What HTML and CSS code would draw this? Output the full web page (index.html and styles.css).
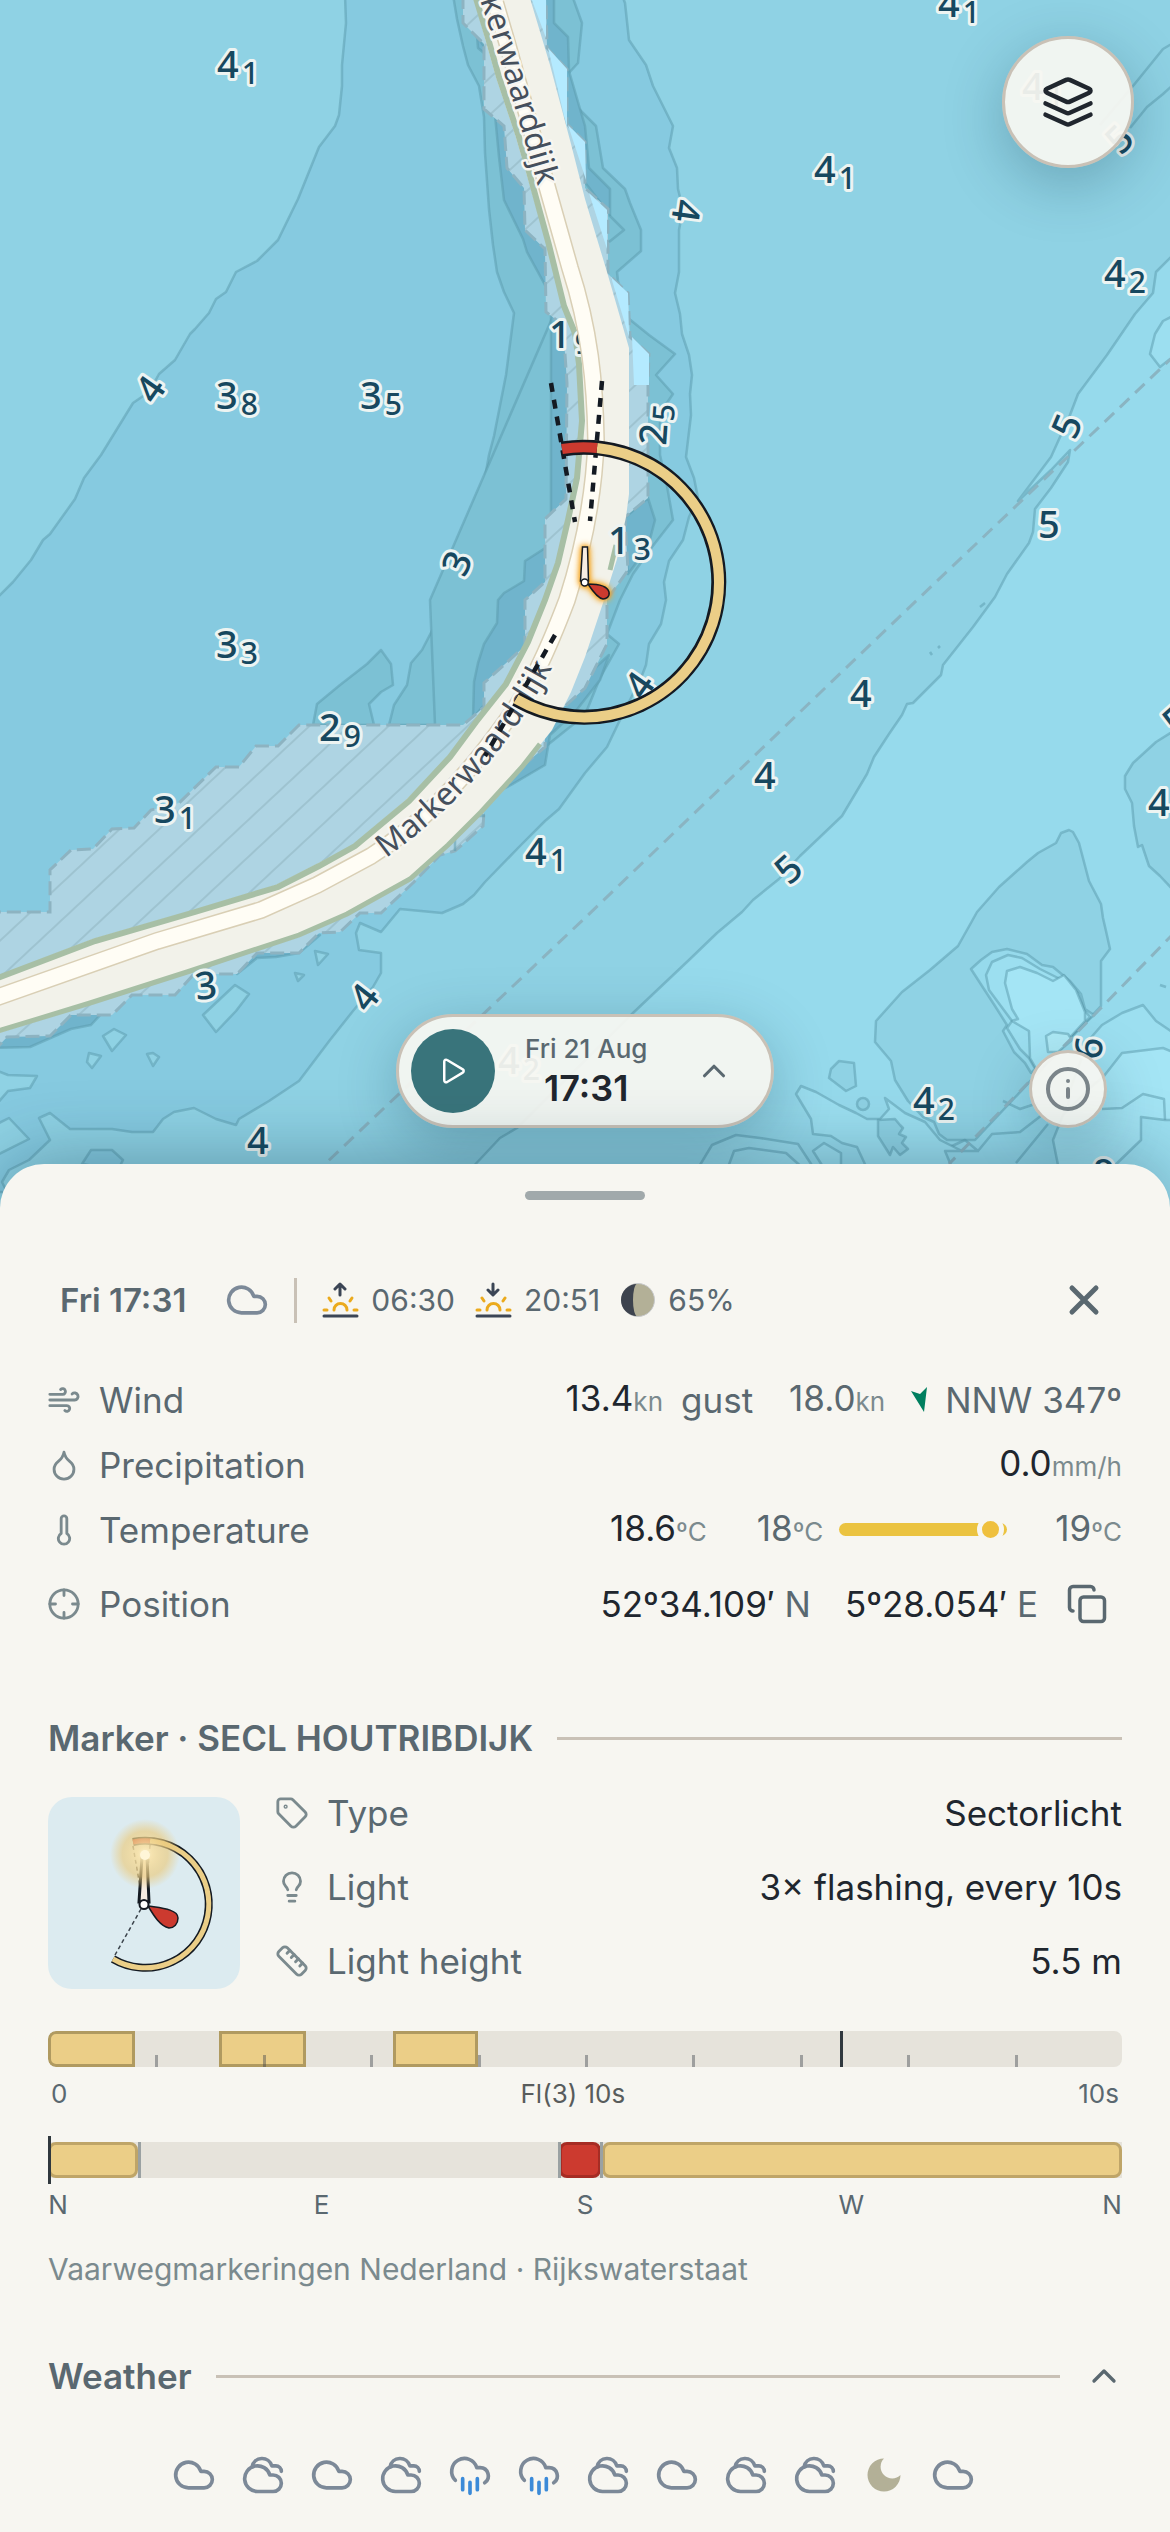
FILE: index.html
```
<!DOCTYPE html>
<html lang="en">
<head>
    <meta charset="utf-8">
    <meta name="viewport" content="width=device-width, initial-scale=1">
    <title>Marker - SECL HOUTRIBDIJK</title>
    <link rel="stylesheet" href="styles.css">
</head>
<body>

<!-- icons used more than once -->
<svg class="sprite" width="0" height="0" aria-hidden="true">
    <symbol id="cloud" viewBox="0 0 24 24"><path d="M17.5 19H9a7 7 0 1 1 6.71-9h1.79a4.5 4.5 0 1 1 0 9Z"/></symbol>
    <symbol id="cloudy" viewBox="0 0 24 24"><path d="M17.5 21H9a7 7 0 1 1 6.71-9h1.79a4.5 4.5 0 1 1 0 9Z"/><path d="M22 10a3 3 0 0 0-3-3h-2.207a5.502 5.502 0 0 0-10.702.5"/></symbol>
    <symbol id="rain" viewBox="0 0 24 24"><path d="M4 14.899A7 7 0 1 1 15.71 8h1.79a4.5 4.5 0 0 1 2.5 8.242"/><path class="drops" d="M16 14v6M8 14v6M12 16v6"/></symbol>
    <symbol id="chevron-up" viewBox="0 0 24 24"><path d="m18 15-6-6-6 6"/></symbol>
</svg>

<main class="map">
    <svg class="chart" viewBox="0 0 1170 1210" preserveAspectRatio="xMidYMin slice" role="img" aria-label="Nautical chart of the Markerwaarddijk">
        <defs>
            <pattern id="hatch" width="27" height="27" patternUnits="userSpaceOnUse" patternTransform="rotate(47)">
                <rect class="tidal" width="27" height="27"/>
                <path class="hatch-line" d="M13 0V27"/>
            </pattern>
            <path id="roadNorth" d="M480 0 Q510 88 535 176 L548 222"/>
            <path id="roadSouth" d="M386 858 C450 812 505 755 552 668 L562 644"/>
        </defs>

        <rect class="d4" width="1170" height="1210"/>

        <!-- depth 3 - 4 m -->
        <path class="d3 contour" d="M345 -5L346 23L342 65L342 86L339 115L335 126L319 147L298 199L278 240L257 261L236 272L226 292L216 299L209 313L195 329L190 334L175 360L159 374L149 392L133 403L101 455L84 478L75 499L50 534L43 540L31 560L13 582L-5 600V1192H7L2 1182L9 1170L29 1160L50 1140L39 1118L50 1113L70 1129L112 1129L132 1132L153 1132L163 1119L174 1112L194 1108L216 1119L236 1125L239 1119L269 1101L299 1081L330 1040L353 1011L373 987L381 973V953L359 950L356 933L360 923L381 932L400 909L442 913L463 904L474 895L485 882L521 845L545 821L559 809L585 773L607 747L619 722L641 678L646 665L649 644L661 624L666 600L664 582L669 561L683 540L689 517L698 498L694 478L686 457L691 415L690 394L692 375L689 355L682 334L680 314L675 293L679 272V230L683 209L678 189L677 168L669 148L673 126L653 86L646 65L629 40L625 3L622 -5Z"/>
        <path class="d4 contour" d="M235 985L249 994L236 1011L216 1032L203 1015ZM114 1029L126 1035L112 1051L103 1036ZM89 1053L101 1056L92 1068L87 1062ZM147 1054L153 1053L159 1057L153 1066ZM315 951L328 954L318 965ZM295 973L304 975L298 981ZM-5 1070L8 1075L37 1076L30 1088L8 1091L-5 1106ZM-5 1125L9 1118L29 1139L-5 1156Z"/>
        <path class="d3 contour" d="M82 1164L91 1150H112L123 1160L118 1170Z"/>

        <!-- depth 2 - 3 m -->
        <path class="d2 contour" d="M453 -5L457 19L463 46L468 65L479 86L484 117L485 153L489 209L493 245L497 272L504 292L514 313L506 375L494 436L489 455L484 483L479 498L475 520L468 540L463 547L456 564L440 600L436 623L422 650L411 663L407 685L394 705L389 725L480 725L560 600L600 400L560 200L500 -5Z"/>
        <path class="d2 contour" d="M313 725L317 704L340 685L367 664L381 650L391 664L393 685L381 692L369 704L374 725Z"/>
        <path class="d2 contour" d="M500 -5L573 -2L582 23L578 63L567 75V97L585 115L596 126L603 168L625 189L630 203L641 230V251L617 272L618 281L628 318L649 335L675 354L656 375L673 394L660 413V455L667 486L673 520L652 547L633 574L620 600L607 634L619 644L600 678L585 715L545 747L515 768L489 800L440 850L430 600L560 300Z"/>

        <!-- depth 1 - 2 m -->
        <path class="d1 contour" d="M477 36L478 48L495 62L495 115L499 157L504 200L523 239L527 252L545 285L565 300L520 100Z"/>
        <path class="d1 contour" d="M551 316V513L570 505V316Z"/>
        <path class="d1 contour" d="M550 545L525 561L524 581L504 593L498 600L497 623L484 644L478 663L474 682L473 718L540 640Z"/>
        <path class="d1 contour" d="M554 -5V23L568 37L569 71L585 126L589 168L610 189V215L560 150L530 -5Z"/>
        <path class="d1 contour" d="M622 520L648 498L655 520L648 547L628 574ZM609 655L600 680L575 712L550 735L545 765L511 785L489 796L500 770L560 700Z"/>
        <path class="d1 contour" d="M-5 1048L30 1047L71 1029L91 1025L103 1012L80 1000L-5 1035ZM237 974L257 958L276 957L299 953L320 935L240 950Z"/>

        <!-- drying banks -->
        <path class="bank edge" d="M463 -5V23L484 44V109L504 126L507 168L524 188L525 230L545 249L546 312L563 325L567 383L566 499L545 519V582L525 600V646L484 683V707L463 725H299L278 746H256L239 767H216L179 803L151 810L134 828L112 829L93 849L71 850L50 870V912H-5V1050L7 1037L50 1036L71 1015H112L132 995H175L194 974H237L257 953H299L319 933L340 932L360 913H381L414 882L440 855L455 851L483 826L485 799L511 776L545 747V724L585 688L607 644L607 600L628 570L625 517L648 498V385L649 354L630 337L628 293L608 274V209L585 188V142L567 124V69L547 48L546 -5Z"/>
        <path class="dry" d="M530 -5H546V38ZM548 48L567 69V128ZM568 125L585 142L586 180ZM589 193L607 210V249ZM611 277L628 293L629 337ZM632 337L649 354V385H634Z"/>
        <path class="thin" d="M609 215L624 230L609 242M485 816H470M455 851V830M470 815H485"/>

        <!-- deeper water in the east -->
        <path class="d5 contour" d="M1175 253L1156 272L1153 293L1135 314L1107 355L1078 394L1070 415L1051 457L1018 501L1051 470L1070 450L1068 462L1051 488L1035 509L1033 532L1029 543L1007 574L995 597L973 627L943 665L941 675L913 703L907 704L902 715L889 734L874 757L867 774L842 816L820 837L800 856L779 879L753 900L742 912L717 933L689 960L633 1013L517 1128L500 1138L470 1170V1215H1175Z"/>
        <path class="line" d="M1175 42L1163 49L1133 86L1100 125M1175 83L1163 94L1147 107L1130 128"/>
        <path class="d6 contour" d="M1175 315L1163 321L1155 334L1150 354L1160 367L1175 355Z"/>
        <path class="d4 contour" d="M1175 730L1156 742L1133 763L1125 776V789L1132 803L1134 826L1138 847L1142 845L1149 866L1160 876L1175 892Z"/>
        <path class="d4 contour" d="M1069 830L1061 833L1056 843L1038 853L1027 862L999 887L977 912L972 921L958 946L930 970L902 992L876 1021L875 1042L891 1061L895 1080L908 1101L923 1117L934 1122L939 1134L947 1140H975L1101 1006V961L1110 949L1106 931L1103 918L1101 904L1089 881L1079 843L1073 832Z"/>
        <path class="d5 contour" d="M971 969L981 960L992 952L1007 949L1027 954L1042 965L1053 967L1070 981L1081 994L1085 1009L1094 1015L1031 1073L1025 1063L1014 1052L1003 1031L1007 1025L995 1006Z"/>
        <path class="d6 contour" d="M986 975L992 962L1008 955L1022 958L1040 969L1062 980L1078 993L1084 1010L1090 1017L1036 1070L1029 1058L1020 1049L1007 1028L1012 1021L989 990Z"/>
        <path class="d7 contour" d="M1005 983L1007 971L1020 967L1037 973L1053 981L1064 975L1076 990L1085 1012V1021L1038 1072L1030 1058L1029 1031L1012 1021L1018 1019L1012 1009Z"/>
        <path class="d8 contour" d="M1046 1036L1053 1032L1068 1034L1072 1040L1058 1052H1048Z"/>
        <path class="d6 contour" d="M1088 1041L1102 1025L1122 1013L1143 1005L1156 1021L1175 1034V1215H1080L1060 1170L1070 1090Z"/>
        <path class="d7 contour" d="M1090 1088L1104 1076L1122 1053L1163 1048L1175 1053V1120L1165 1120L1141 1117V1140L1110 1170H1059L1053 1140L1063 1115Z"/>
        <path class="line" d="M1102 1109L1122 1108L1143 1094L1164 1099L1165 1120M1003 1101L1020 1109L1038 1103M962 1151L979 1151M950 1147L965 1140L978 1151L992 1134L1020 1132L1042 1115M1016 1163L1048 1124"/>
        <path class="d6 contour" d="M796 1094L801 1086L816 1092L839 1105L856 1113L867 1119H880L889 1109L885 1098L905 1113L925 1122L940 1140L962 1151L945 1151L955 1175H870L857 1147L842 1143L831 1136L813 1134L811 1119Z"/>
        <path class="d4 contour" d="M831 1069L839 1061L854 1063L856 1086L846 1091L829 1078ZM857 1104a6 6 0 1 0 12 0a6 6 0 1 0-12 0M878 1120L895 1119L900 1125L903 1128L899 1134L906 1137L902 1143L908 1149L900 1155L893 1147L890 1155L878 1136Z"/>
        <path class="d6 contour" d="M697 1170L712 1145L736 1135L760 1138L798 1144L815 1170ZM727 1170L734 1151L749 1148L786 1153L805 1170ZM813 1151L824 1143L841 1153V1170H825Z"/>
        <path class="line" d="M980 607l5-4M930 652l2 3M938 648l2-2M1160 985l6 2"/>
        <path class="route" d="M1175 355L917 600L587 916L326 1163M1175 932L949 1164"/>

        <!-- dike -->
        <path class="land" d="M473 -5L485 38L496 77L515 134L526 172L547 245L563 306L573 333L578 364L581 421L576 478L567 520L556 563L543 600L526 642L504 684L474 722L448 757L407 799L353 845L317 864L276 885L194 910L93 939L-5 977V1034L90 1005L187 973L299 937L347 916L410 881L448 847L481 814L522 768L552 730L571 692L585 657L604 600L617 559L626 517L629 494V348L607 272L585 199L571 144L550 65L529 -5Z"/>
        <path class="grass" d="M475 -5L488 38L499 77L518 134L529 172L549 245L564 306L575 333L579 364L582 421L577 478L568 520L558 563L545 600L528 642L506 684L476 722L450 757L409 801L355 846L319 866L278 887L195 912L95 941L-5 979"/>
        <path class="grass thin-grass" d="M-5 1032L90 1003L187 972L299 935L347 914L410 879L448 845L481 812L522 767L540 744M610 570L616 545"/>
        <g class="depth"><text x="549" y="348">1<tspan dx="4" dy="6">9</tspan></text></g>
        <path class="casing" d="M493 -5L508 46L548 190L570 268C590 330 595 383 596 440C594 500 583 550 567 600C548 650 530 690 504 724C460 785 420 825 371 856L317 885L261 910L157 941L-5 998"/>
        <path class="road" d="M493 -5L508 46L548 190L570 268C590 330 595 383 596 440C594 500 583 550 567 600C548 650 530 690 504 724C460 785 420 825 371 856L317 885L261 910L157 941L-5 998"/>

        <g class="road-name">
            <text><textPath href="#roadNorth">kerwaarddijk</textPath></text>
            <text><textPath href="#roadSouth">Markerwaarddijk</textPath></text>
        </g>

        <!-- soundings, decimals set lower and smaller -->
        <g class="depth">
            <text x="217" y="78">4<tspan dx="3" dy="6">1</tspan></text>
            <text x="216" y="409">3<tspan dx="3" dy="6">8</tspan></text>
            <text x="360" y="409">3<tspan dx="3" dy="6">5</tspan></text>
            <text x="938" y="17">4<tspan dx="3" dy="6">1</tspan></text>
            <text x="814" y="183">4<tspan dx="3" dy="6">1</tspan></text>
            <text x="1104" y="287">4<tspan dx="3" dy="6">2</tspan></text>
            <text x="1022" y="100">4<tspan dx="3" dy="6">1</tspan></text>
            <text x="608" y="554">1<tspan dx="4" dy="6">3</tspan></text>
            <text x="216" y="658">3<tspan dx="3" dy="6">3</tspan></text>
            <text x="319" y="741">2<tspan dx="3" dy="6">9</tspan></text>
            <text x="154" y="823">3<tspan dx="3" dy="6">1</tspan></text>
            <text x="525" y="865">4<tspan dx="3" dy="6">1</tspan></text>
            <text x="498" y="1074">4<tspan dx="3" dy="6">2</tspan></text>
            <text x="913" y="1114">4<tspan dx="3" dy="6">2</tspan></text>
            <text x="1038" y="538">5</text>
            <text x="247" y="1154">4</text>
            <text x="850" y="707">4</text>
            <text x="754" y="789">4</text>
            <text x="1148" y="816">4</text>
            <text x="1093" y="1186">9</text>
            <text transform="translate(666 446) rotate(-86)">2<tspan dx="3" dy="6">5</tspan></text>
            <text transform="translate(150 390) rotate(-55)" x="-10" y="13">4</text>
            <text transform="translate(457 564) rotate(-66)" x="-10" y="13">3</text>
            <text transform="translate(686 210) rotate(98)" x="-10" y="13">4</text>
            <text transform="translate(1067 427) rotate(-67)" x="-10" y="13">5</text>
            <text transform="translate(1119 140) rotate(-45)" x="-10" y="13">5</text>
            <text transform="translate(205 986) rotate(-6)" x="-10" y="13">3</text>
            <text transform="translate(364 998) rotate(-52)" x="-10" y="13">4</text>
            <text transform="translate(788 870) rotate(-42)" x="-10" y="13">5</text>
            <text transform="translate(639 686) rotate(-55)" x="-10" y="13">4</text>
            <text transform="translate(1176 721) rotate(-42)" x="-10" y="13">5</text>
            <text transform="translate(1089 1049) rotate(-80)" x="-10" y="13">6</text>
        </g>

        <!-- sector light -->
        <path class="bearing" d="M551 383L575 522M602 381L590 521M555 635L485 756"/>
        <path class="ring-border" d="M516 699A135 135 0 1 0 562 449"/>
        <path class="ring-white" d="M516 699A135 135 0 1 0 597 448"/>
        <path class="ring-red" d="M597 448A135 135 0 0 0 562 449"/>
        <g class="beacon">
            <path d="M582.500 547H587.500L588.500 581H580.500Z" fill="#f6ece2"/>
            <path d="M588 584C594 584 607 585 609 592C610 597 606 599 603 599C597 598 592 590 588 584Z" fill="#cc3a2f"/>
            <circle cx="584.700" cy="582.500" r="3.500" fill="#fff"/>
        </g>
    </svg>

    <button class="round-button layers" type="button" aria-label="Map layers">
        <svg class="icon" width="54" height="54" viewBox="0 0 24 24"><path d="m12.830 2.180a2 2 0 0 0-1.660 0L2.600 6.080a1 1 0 0 0 0 1.830l8.580 3.910a2 2 0 0 0 1.660 0l8.580-3.900a1 1 0 0 0 0-1.830Z"/><path d="m22 17.650-9.170 4.160a2 2 0 0 1-1.660 0L2 17.650"/><path d="m22 12.650-9.170 4.160a2 2 0 0 1-1.660 0L2 12.650"/></svg>
    </button>

    <div class="time-pill">
        <button class="play" type="button" aria-label="Play forecast">
            <svg class="icon" width="30" height="30" viewBox="0 0 24 24"><path d="M5 4.500a1.500 1.500 0 0 1 2.300-1.300l12.500 7.500a1.500 1.500 0 0 1 0 2.600L7.300 20.800A1.500 1.500 0 0 1 5 19.500Z"/></svg>
        </button>
        <div class="pill-text">
            <span class="pill-date">Fri 21 Aug</span>
            <span class="pill-time">17:31</span>
        </div>
        <button class="plain-button expand" type="button" aria-label="Expand timeline">
            <svg class="icon" width="38" height="38"><use href="#chevron-up"/></svg>
        </button>
    </div>

    <button class="round-button info" type="button" aria-label="Map information">
        <svg class="icon" width="48" height="48" viewBox="0 0 24 24"><circle cx="12" cy="12" r="10"/><path d="M12 16v-4M12 8h.01"/></svg>
    </button>
</main>

<section class="sheet">
    <div class="handle"></div>

    <header class="sheet-header">
        <h1>Fri 17:31</h1>
        <svg class="icon weather-icon" width="44" height="44"><use href="#cloud"/></svg>
        <span class="divider"></span>
        <span class="sun">
            <svg class="sun-icon" width="37" height="37" viewBox="0 0 37 37"><path class="sun-dark" d="M18 13V3M13 7L18 2L23 7M2 34H35"/><path class="sun-rays" d="M12 28a6.500 6.500 0 0 1 13 0M2 28H5M32 28H35M7 16L9 19M30 16L28 19"/></svg>
            06:30
        </span>
        <span class="sun">
            <svg class="sun-icon" width="37" height="37" viewBox="0 0 37 37"><path class="sun-dark" d="M18 2V12M13 8L18 13L23 8M2 34H35"/><path class="sun-rays" d="M12 28a6.500 6.500 0 0 1 13 0M2 28H5M32 28H35M7 16L9 19M30 16L28 19"/></svg>
            20:51
        </span>
        <span class="sun">
            <svg width="36" height="36" viewBox="0 0 36 36"><circle cx="18" cy="18" r="16.500" fill="#b3b097" stroke="#c8cacc"/><path d="M17 2A16 16 0 0 0 17 34A4 16 0 0 1 17 2Z" fill="#3d434e"/></svg>
            65%
        </span>
        <button class="plain-button close" type="button" aria-label="Close">
            <svg class="icon" width="48" height="48" viewBox="0 0 24 24"><path d="M18 6 6 18M6 6l12 12"/></svg>
        </button>
    </header>

    <dl class="facts">
        <div class="fact">
            <dt><svg class="icon" width="34" height="34" viewBox="0 0 24 24"><path d="M17.700 7.700a2.500 2.500 0 1 1 1.800 4.300H2"/><path d="M9.600 4.600A2 2 0 1 1 11 8H2"/><path d="M12.600 19.400A2 2 0 1 0 14 16H2"/></svg>Wind</dt>
            <dd class="wind">
                <span><b>13.4</b><small>kn</small></span>
                <span>gust</span>
                <span class="gust">18.0<small>kn</small></span>
                <svg width="16" height="26" viewBox="0 0 16 26"><path d="M0 4L9 7L16 0L13 25Z" fill="#007f5f"/></svg>
                <span>NNW 347º</span>
            </dd>
        </div>
        <div class="fact">
            <dt><svg class="icon" width="34" height="34" viewBox="0 0 24 24"><path d="M12 22a7 7 0 0 0 7-7c0-2-1-3.900-3-5.500s-3.500-4-4-6.500c-.5 2.500-2 4.900-4 6.500C6 11.100 5 13 5 15a7 7 0 0 0 7 7z"/></svg>Precipitation</dt>
            <dd><span><b>0.0</b><small>mm/h</small></span></dd>
        </div>
        <div class="fact">
            <dt><svg class="icon" width="34" height="34" viewBox="0 0 24 24"><path d="M14 4v10.540a4 4 0 1 1-4 0V4a2 2 0 0 1 4 0Z"/></svg>Temperature</dt>
            <dd class="temp">
                <span><b>18.6</b><small>ºC</small></span>
                <span class="low">18<small>ºC</small></span>
                <span class="range"><span class="range-dot" style="left: 90%"></span></span>
                <span class="high">19<small>ºC</small></span>
            </dd>
        </div>
        <div class="fact position">
            <dt><svg class="icon" width="34" height="34" viewBox="0 0 24 24"><circle cx="12" cy="12" r="10"/><path d="M22 12h-4M6 12H2M12 6V2M12 22v-4"/></svg>Position</dt>
            <dd>
                <span><b>52º34.109′</b> N</span>
                <span><b>5º28.054′</b> E</span>
                <button class="plain-button copy" type="button" aria-label="Copy position">
                    <svg class="icon" width="42" height="42" viewBox="0 0 24 24"><rect width="14" height="14" x="8" y="8" rx="2"/><path d="M4 16c-1.100 0-2-.9-2-2V4c0-1.100.9-2 2-2h10c1.100 0 2 .9 2 2"/></svg>
                </button>
            </dd>
        </div>
    </dl>

    <div class="section-title">
        <h2>Marker · SECL HOUTRIBDIJK</h2>
        <span class="rule"></span>
    </div>

    <div class="marker">
        <svg class="thumb" width="192" height="192" viewBox="0 0 192 192" role="img" aria-label="Sector light symbol">
            <defs>
                <radialGradient id="glow">
                    <stop offset="0" stop-color="#fff3cf"/>
                    <stop offset=".2" stop-color="#f8e2a8" stop-opacity=".9"/>
                    <stop offset=".65" stop-color="#ebca7c" stop-opacity=".65"/>
                    <stop offset="1" stop-color="#ebca7c" stop-opacity="0"/>
                </radialGradient>
            </defs>
            <path d="M93 112L67 158M85 49L93 95M102 48L98 95" fill="none" stroke="#3c444c" stroke-width="1.500" stroke-dasharray="4 3"/>
            <path d="M65 162A63.500 63.500 0 1 0 85 45" fill="none" stroke="#141a22" stroke-width="8"/>
            <path d="M65 162A63.500 63.500 0 1 0 102 44" fill="none" stroke="#ebce87" stroke-width="5"/>
            <path d="M102 44A63.500 63.500 0 0 0 85 45" fill="none" stroke="#cc3a2f" stroke-width="5"/>
            <path d="M94 60H99L101 105H91Z" fill="#f6ece2" stroke="#141a22" stroke-width="3"/>
            <path d="M100 109C112 111 130 112 130 121C130 127 126 131 121 131C112 129 106 119 100 109Z" fill="#cc3a2f" stroke="#141a22" stroke-width="1.500"/>
            <circle cx="96" cy="107.500" r="4.500" fill="#fff" stroke="#141a22" stroke-width="2"/>
            <circle cx="97" cy="57" r="35" fill="url(#glow)"/>
            <circle cx="97" cy="58" r="5" fill="#fff6d8"/>
        </svg>
        <dl class="marker-facts">
            <div class="fact">
                <dt><svg class="icon" width="34" height="34" viewBox="0 0 24 24"><path d="M12.586 2.586A2 2 0 0 0 11.172 2H4a2 2 0 0 0-2 2v7.172a2 2 0 0 0 .586 1.414l8.704 8.704a2.426 2.426 0 0 0 3.420 0l6.580-6.580a2.426 2.426 0 0 0 0-3.420z"/><circle cx="7.500" cy="7.500" r=".5"/></svg>Type</dt>
                <dd><b>Sectorlicht</b></dd>
            </div>
            <div class="fact">
                <dt><svg class="icon" width="34" height="34" viewBox="0 0 24 24"><path d="M15 14c.2-1 .7-1.700 1.500-2.500 1-.9 1.500-2.200 1.500-3.500A6 6 0 0 0 6 8c0 1 .2 2.200 1.500 3.500.7.7 1.300 1.500 1.500 2.500M9 18h6M10 22h4"/></svg>Light</dt>
                <dd><b>3× flashing, every 10s</b></dd>
            </div>
            <div class="fact">
                <dt><svg class="icon" width="34" height="34" viewBox="0 0 24 24"><path d="M21.300 15.300a2.400 2.400 0 0 1 0 3.400l-2.600 2.600a2.400 2.400 0 0 1-3.400 0L2.700 8.700a2.410 2.410 0 0 1 0-3.400l2.600-2.600a2.410 2.410 0 0 1 3.400 0Z"/><path d="m14.500 12.500 2-2M11.500 9.500l2-2M8.500 6.500l2-2M17.500 15.500l2-2"/></svg>Light height</dt>
                <dd><b>5.5 m</b></dd>
            </div>
        </dl>
    </div>

    <!-- flash pattern over one period -->
    <div class="bar rhythm">
        <span class="flash" style="left: 0; width: 8.1%"></span>
        <span class="flash" style="left: 15.900%; width: 8.1%"></span>
        <span class="flash" style="left: 32.100%; width: 7.900%"></span>
        <span class="tick" style="left: 10%"></span>
        <span class="tick" style="left: 20%"></span>
        <span class="tick" style="left: 30%"></span>
        <span class="tick" style="left: 40%"></span>
        <span class="tick" style="left: 50%"></span>
        <span class="tick" style="left: 60%"></span>
        <span class="tick" style="left: 70%"></span>
        <span class="tick" style="left: 80%"></span>
        <span class="tick" style="left: 90%"></span>
        <span class="cursor" style="left: 73.700%"></span>
    </div>
    <div class="bar-labels inset"><span>0</span><span class="code">Fl(3) 10s</span><span>10s</span></div>

    <!-- sectors by bearing -->
    <div class="bar sectors">
        <span class="sector" style="left: 0; width: 8.4%"></span>
        <span class="sector red" style="left: 47.600%; width: 3.900%"></span>
        <span class="sector" style="left: 51.600%; width: 48.400%"></span>
        <span class="limit" style="left: 8.400%"></span>
        <span class="limit" style="left: 47.500%"></span>
        <span class="limit" style="left: 51.400%"></span>
        <span class="cursor tall" style="left: 0"></span>
    </div>
    <div class="bar-labels compass"><span>N</span><span>E</span><span>S</span><span>W</span><span>N</span></div>

    <p class="source">Vaarwegmarkeringen Nederland · Rijkswaterstaat</p>

    <div class="section-title weather-title">
        <h2>Weather</h2>
        <span class="rule"></span>
        <button class="plain-button" type="button" aria-label="Collapse weather">
            <svg class="icon" width="40" height="40"><use href="#chevron-up"/></svg>
        </button>
    </div>

    <div class="forecast">
        <svg class="icon weather-icon" width="44" height="44"><use href="#cloud"/></svg>
        <svg class="icon weather-icon" width="44" height="44"><use href="#cloudy"/></svg>
        <svg class="icon weather-icon" width="44" height="44"><use href="#cloud"/></svg>
        <svg class="icon weather-icon" width="44" height="44"><use href="#cloudy"/></svg>
        <svg class="icon weather-icon" width="44" height="44"><use href="#rain"/></svg>
        <svg class="icon weather-icon" width="44" height="44"><use href="#rain"/></svg>
        <svg class="icon weather-icon" width="44" height="44"><use href="#cloudy"/></svg>
        <svg class="icon weather-icon" width="44" height="44"><use href="#cloud"/></svg>
        <svg class="icon weather-icon" width="44" height="44"><use href="#cloudy"/></svg>
        <svg class="icon weather-icon" width="44" height="44"><use href="#cloudy"/></svg>
        <svg width="44" height="44" viewBox="0 0 24 24"><path d="M12 3a6 6 0 0 0 9 9 9 9 0 1 1-9-9Z" fill="#b3b097"/></svg>
        <svg class="icon weather-icon" width="44" height="44"><use href="#cloud"/></svg>
    </div>
</section>

</body>
</html>
```
FILE: styles.css
```
* {
  box-sizing: border-box;
}

body {
  margin: 0;
  background: #f7f6f1;
  color: #5a6870;
  font-family: Inter, "Noto Sans", sans-serif;
  font-size: 35px;
  line-height: 40px;
}

h1, h2, dl, dd, p {
  margin: 0;
}

b, small {
  font-weight: 400;
}

b {
  color: #20262e;
}

small {
  color: #7b8a8e;
  font-size: 26px;
}

button {
  padding: 0;
  border: none;
  background: none;
  color: inherit;
  cursor: pointer;
}

svg {
  display: block;
  flex: none;
}

.sprite {
  position: absolute;
}

.icon {
  fill: none;
  stroke: currentColor;
  stroke-width: 2;
  stroke-linecap: round;
  stroke-linejoin: round;
}

/* Map */
.map {
  position: relative;
  overflow: hidden;
  height: 1210px;
}

.chart {
  width: 100%;
  height: 100%;
}

/* water, shallow to deep */
.d1 { fill: #70b4cc; }
.d2 { fill: #7cc1d4; }
.d3 { fill: #86cae0; }
.d4 { fill: #8fd2e4; }
.d5 { fill: #96daec; }
.d6 { fill: #9cdff0; }
.d7 { fill: #a4e5f5; }
.d8 { fill: #aeeaf6; }
.dry { fill: #b4eaff; }
.tidal { fill: #aed4e3; }
.bank { fill: url(#hatch); }
.land { fill: #f2f2ea; }

.contour, .line, .thin {
  stroke: #5a9aab;
  stroke-opacity: .5;
  stroke-width: 2.5px;
  stroke-linejoin: round;
}

.line, .thin, .route, .grass, .casing, .road, .bearing {
  fill: none;
}

.edge {
  stroke: #8db3c1;
  stroke-width: 3px;
  stroke-dasharray: 14 6;
}

.hatch-line {
  stroke: #9ec3d0;
  stroke-width: 2px;
}

.route {
  stroke: #8ab4c2;
  stroke-width: 3px;
  stroke-dasharray: 13 8;
}

.grass {
  stroke: #a7bfa5;
  stroke-width: 6px;
}

.thin-grass {
  stroke-width: 5px;
}

.casing {
  stroke: #d9cfb5;
  stroke-width: 18px;
}

.road {
  stroke: #fffdf5;
  stroke-width: 15px;
}

.road-name {
  fill: #454f5c;
  stroke: #f7f6f1;
  stroke-width: 5px;
  stroke-linejoin: round;
  paint-order: stroke;
  font-family: "Noto Sans", sans-serif;
  font-size: 32px;
}

.depth {
  fill: #17485f;
  stroke: #edf4f2;
  stroke-width: 6px;
  stroke-linejoin: round;
  paint-order: stroke;
  font-family: "Noto Sans", sans-serif;
  font-size: 38px;
  font-weight: 500;
}

.depth tspan {
  font-size: 30px;
}

.bearing {
  stroke: #141a22;
  stroke-width: 4.5px;
  stroke-dasharray: 9 8;
}

.ring-border, .ring-white, .ring-red {
  fill: none;
  stroke: #141a22;
  stroke-width: 15px;
}

.ring-white {
  stroke: #ebce87;
  stroke-width: 10px;
}

.ring-red {
  stroke: #cc3a2f;
  stroke-width: 10px;
}

.beacon {
  stroke: #141a22;
  stroke-width: 1.5px;
  filter: drop-shadow(0 0 3px #f5a623) drop-shadow(0 0 2px #f5a623);
}

/* Controls over the map */
.round-button, .time-pill {
  position: absolute;
  display: flex;
  align-items: center;
  border: 3px solid #c9c1b6;
  background: rgba(247, 246, 241, .94);
  box-shadow: 0 16px 60px rgba(10, 50, 70, .28);
}

.round-button {
  justify-content: center;
  border-radius: 50%;
}

.layers {
  top: 36px;
  right: 36px;
  width: 132px;
  height: 132px;
  color: #20262e;
}

.info {
  top: 1050px;
  right: 63px;
  width: 78px;
  height: 78px;
  color: #7b858a;
}

.time-pill {
  top: 1014px;
  left: 50%;
  width: 378px;
  height: 114px;
  padding: 0 38px 0 12px;
  border-radius: 57px;
  transform: translateX(-50%);
}

.play {
  display: flex;
  align-items: center;
  justify-content: center;
  width: 84px;
  height: 84px;
  border-radius: 50%;
  background: #39747b;
  color: #fff;
}

.pill-text {
  display: flex;
  flex-direction: column;
  align-items: center;
  margin-left: 30px;
}

.pill-date {
  font-size: 26px;
  font-weight: 500;
  line-height: 34px;
}

.pill-time {
  color: #20262e;
  font-size: 36px;
  font-weight: 600;
  line-height: 44px;
}

.expand {
  margin-left: auto;
}

/* Bottom sheet */
.sheet {
  position: relative;
  margin-top: -46px;
  padding: 27px 48px 34px;
  border-radius: 44px 44px 0 0;
  background: #f7f6f1;
  box-shadow: 0 -6px 70px rgba(10, 50, 70, .35);
}

.handle {
  width: 120px;
  height: 9px;
  margin: 0 auto;
  border-radius: 5px;
  background: #a1a9ab;
}

.sheet-header {
  display: flex;
  align-items: center;
  height: 64px;
  margin-top: 68px;
  padding: 0 14px 0 12px;
  font-size: 30px;
}

.sheet-header h1 {
  font-size: 33px;
  font-weight: 600;
}

.weather-icon {
  color: #7c8998;
}

.drops {
  stroke: #3b8ad8;
}

.sheet-header .weather-icon {
  margin-left: 39px;
}

.divider {
  width: 3px;
  height: 45px;
  margin: 0 25px;
  background: #c9c1b6;
}

.sun {
  display: flex;
  align-items: center;
  gap: 12px;
  margin-right: 20px;
}

.sun-icon {
  fill: none;
  stroke-width: 3;
  stroke-linecap: round;
  stroke-linejoin: round;
}

.sun-dark { stroke: #3b4555; }
.sun-rays { stroke: #ebaa1d; }

.close {
  margin-left: auto;
}

.close .icon {
  stroke-width: 2.5;
}

.facts {
  margin-top: 35px;
}

.fact {
  display: flex;
  align-items: center;
  justify-content: space-between;
  height: 65px;
}

.fact dt {
  display: flex;
  align-items: center;
  gap: 18px;
}

.fact dt .icon {
  margin-left: -1px;
  color: #7b8a8e;
}

.fact dd {
  display: flex;
  align-items: center;
  white-space: nowrap;
}

.wind {
  gap: 18px;
}

.wind .gust {
  margin: 0 8px 0 18px;
}

.temp .low {
  margin: 0 16px 0 50px;
}

.range {
  position: relative;
  width: 168px;
  height: 13px;
  border-radius: 7px;
  background: #ebc340;
}

/* marker of the current temperature on the day range */
.range-dot {
  position: absolute;
  top: -7px;
  width: 27px;
  height: 27px;
  margin-left: -14px;
  border: 5px solid #f7f6f1;
  border-radius: 50%;
  background: #efc03e;
}

.temp .high {
  margin-left: 48px;
}

.position {
  height: 84px;
}

.position dd {
  gap: 34px;
}

.copy {
  margin: 0 14px 0 -6px;
}

.section-title {
  display: flex;
  align-items: center;
  gap: 24px;
  height: 48px;
  margin-top: 68px;
}

.section-title h2 {
  font-size: 35px;
  font-weight: 600;
}

.rule {
  flex: 1;
  height: 3px;
  background: #c9c1b6;
}

.marker {
  display: flex;
  gap: 36px;
  margin-top: 35px;
}

.thumb {
  border-radius: 24px;
  background: #dcebf0;
}

.marker-facts {
  display: flex;
  flex: 1;
  flex-direction: column;
  gap: 42px;
}

.marker-facts .fact {
  height: 32px;
}

/* Bars */
.bar {
  position: relative;
  height: 36px;
  background: #e6e3db;
}

.rhythm {
  overflow: hidden;
  margin-top: 42px;
  border-radius: 8px;
}

.flash, .sector {
  position: absolute;
  top: 0;
  height: 36px;
  border: 3px solid #b09a60;
  background: #ebce87;
}

.flash:first-child {
  border-radius: 8px 0 0 8px;
}

.sector {
  border-color: #bfa568;
  border-radius: 8px;
}

.sector.red {
  border-color: #a62c24;
  background: #cc3a2f;
}

.tick, .limit, .cursor {
  position: absolute;
  bottom: 0;
  width: 3px;
  height: 12px;
  background: rgba(60, 65, 75, .42);
}

.limit {
  height: 36px;
  background: #9aa1a2;
}

.cursor {
  height: 36px;
  background: #30383e;
}

.tall {
  bottom: -6px;
  height: 48px;
}

.bar-labels {
  display: flex;
  justify-content: space-between;
  margin-top: 9px;
  font-size: 26px;
  line-height: 36px;
}

.inset {
  padding: 0 3px;
}

.compass span {
  width: 20px;
  text-align: center;
}

.code {
  color: #585c5c;
}

.sectors {
  margin-top: 30px;
}

.source {
  margin-top: 26px;
  color: #7b8a8e;
  font-size: 30px;
}

.weather-title {
  margin-top: 63px;
}

.weather-title .plain-button {
  margin: 0 -2px 0 0;
}

/* one icon per forecast step */
.forecast {
  display: flex;
  gap: 25px;
  margin-top: 53px;
  padding-left: 124px;
}
```
